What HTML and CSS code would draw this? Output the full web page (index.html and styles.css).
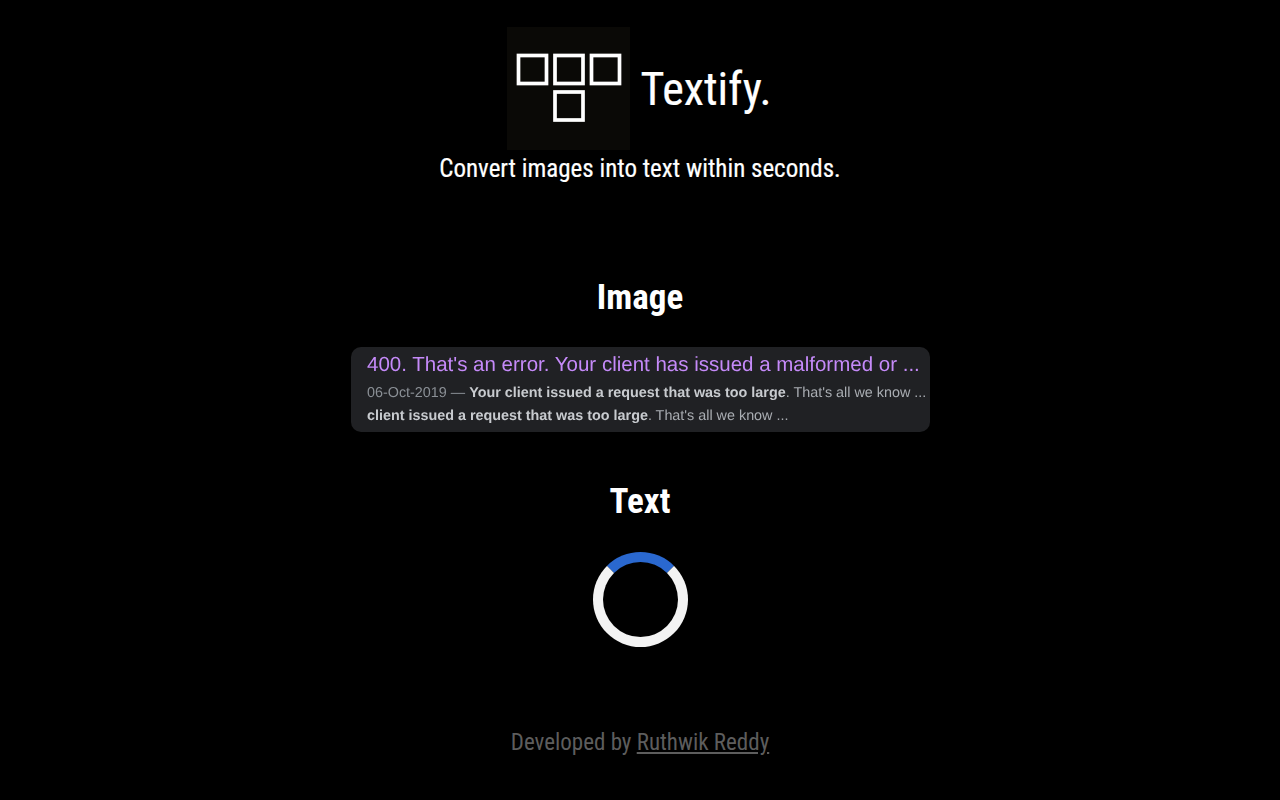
FILE: index.html
```html
<!DOCTYPE html>
<html lang="en">
<head>
<meta charset="utf-8">
<title>Textify</title>
<link rel="stylesheet" href="styles.css">
</head>
<body>
<main class="page">
  <header class="brand">
    <div class="brand-row">
      <div class="logo">
        <svg width="123" height="123" viewBox="0 0 123 123" fill="none" stroke="#fff" stroke-width="3.7">
          <rect x="11.5" y="28.5" width="28" height="28"/>
          <rect x="48" y="28.5" width="28" height="28"/>
          <rect x="84.5" y="28.5" width="28" height="28"/>
          <rect x="48" y="65" width="28" height="28"/>
        </svg>
      </div>
      <h1 class="title">Textify.</h1>
    </div>
    <p class="tagline">Convert images into text within seconds.</p>
  </header>
  <h2 class="heading heading-image">Image</h2>
  <div class="shot">
    <div class="shot-title">400. That's an error. Your client has issued a malformed or ...</div>
    <div class="shot-line"><span class="shot-date">06-Oct-2019 — </span><b>Your client issued a request that was too large</b>. That's all we know ...</div>
    <div class="shot-line"><b>client issued a request that was too large</b>. That's all we know ...</div>
  </div>
  <h2 class="heading heading-text">Text</h2>
  <div class="spinner"></div>
  <footer class="footer">Developed by <a href="#" class="footer-link">Ruthwik Reddy</a></footer>
</main>
</body>
</html>
```
FILE: styles.css
```css
* { box-sizing: border-box; }
html, body { margin: 0; height: 100%; background: #000; }
body { font-family: "Roboto", "Liberation Sans", sans-serif; color: #fff; overflow: hidden; }
.page { display: flex; flex-direction: column; align-items: center; padding-top: 27px; }
.brand { display: flex; flex-direction: column; align-items: center; }
.brand-row { display: flex; align-items: center; gap: 10px; margin-left: -1px; }
.logo { width: 123px; height: 123px; background: #0a0906; }
.logo svg { display: block; }
.title { margin: 0; font-size: 46px; line-height: 52px; font-weight: 400; font-stretch: 75%; -webkit-text-stroke: 0.2px #fff; }
.tagline { margin: 3px 0 0; font-size: 25px; line-height: 32px; font-stretch: 75%; -webkit-text-stroke: 0.2px #fff; }
.heading { margin: 0; font-size: 35px; line-height: 38px; font-weight: 700; font-stretch: 75%; }
.heading-image { margin-top: 94px; }
.shot { width: 579px; height: 85px; margin: 30px 0 0 1px; padding: 5px 0 0 16px; background: #202124; border-radius: 10px; font-family: "Liberation Sans", Arial, sans-serif; white-space: nowrap; text-rendering: geometricPrecision; }
.shot-title { font-size: 20.5px; line-height: 26px; margin-bottom: 4px; color: #c58af9; filter: blur(0.4px); }
.shot-line { font-size: 14.36px; line-height: 23px; color: #a9adb2; filter: blur(0.4px); }
.shot-date { color: #8b9096; }
.shot-line b { color: #c8cbcf; }
.heading-text { margin-top: 51px; }
.spinner { width: 95px; height: 95px; margin: 31px 0 0 1px; border: 10px solid #f3f3f3; border-top-color: #2a68cf; border-radius: 50%; }
.footer { margin-top: 81px; font-size: 23px; line-height: 30px; color: #5d5d5d; font-stretch: 75%; }
.footer-link { color: #5d5d5d; }
```
